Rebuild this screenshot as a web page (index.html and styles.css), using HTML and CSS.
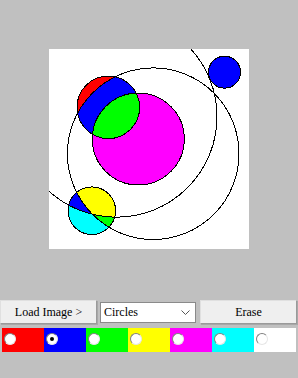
FILE: index.html
```html
<!DOCTYPE html>
<html>
<head>
<meta charset="utf-8">
<link rel="stylesheet" href="styles.css">
</head>
<body>
<div class="stage">
  <svg class="canvas" width="200" height="200" viewBox="0 0 200 200" shape-rendering="crispEdges">
    <defs>
      <clipPath id="inC2"><circle cx="67.4" cy="67.6" r="100.6"/></clipPath>
      <clipPath id="tl"><circle cx="59.3" cy="58.3" r="31.3"/></clipPath>
      <clipPath id="bl"><circle cx="42.8" cy="161.7" r="23.8"/></clipPath>
    </defs>
    <rect width="200" height="200" fill="#fff"/>
    <!-- magenta -->
    <circle cx="89.3" cy="90" r="46" fill="#ff00ff"/>
    <!-- top-left circle: red outside c1, blue inside c1, green inside magenta -->
    <circle cx="59.3" cy="58.3" r="31.3" fill="#ff0000"/>
    <g clip-path="url(#tl)">
      <circle cx="104.2" cy="104.7" r="85.8" fill="#0000ff"/>
      <circle cx="89.3" cy="90" r="46" fill="#00ff00"/>
    </g>
    <!-- bottom-left circle: four regions -->
    <circle cx="42.8" cy="161.7" r="23.8" fill="#00ffff"/>
    <g clip-path="url(#bl)">
      <circle cx="104.2" cy="104.7" r="85.8" fill="#00ff00"/>
      <circle cx="67.4" cy="67.6" r="100.6" fill="#0000ff"/>
      <g clip-path="url(#inC2)">
        <circle cx="104.2" cy="104.7" r="85.8" fill="#ffff00"/>
      </g>
    </g>
    <!-- small blue -->
    <circle cx="175.5" cy="23.2" r="16" fill="#0000ff"/>
    <!-- outlines -->
    <g fill="none" stroke="#000">
      <circle cx="89.3" cy="90" r="46"/>
      <circle cx="59.3" cy="58.3" r="31.3"/>
      <circle cx="42.8" cy="161.7" r="23.8"/>
      <circle cx="175.5" cy="23.2" r="16"/>
      <circle cx="104.2" cy="104.7" r="85.8"/>
      <circle cx="67.4" cy="67.6" r="100.6"/>
    </g>
  </svg>
</div>
<div class="toolbar">
  <button class="btn btn-load">Load Image &gt;</button>
  <div class="select">
    <span class="select-text">Circles</span>
    <svg class="chev" width="9" height="5" viewBox="0 0 9 5"><path d="M0.5 0.5 L4.5 4.5 L8.5 0.5" fill="none" stroke="#555" stroke-width="1"/></svg>
  </div>
  <button class="btn btn-erase">Erase</button>
</div>
<div class="palette">
  <div class="cell red"><span class="radio"></span></div>
  <div class="cell blue"><span class="radio checked"></span></div>
  <div class="cell green"><span class="radio"></span></div>
  <div class="cell yellow"><span class="radio"></span></div>
  <div class="cell magenta"><span class="radio"></span></div>
  <div class="cell cyan"><span class="radio"></span></div>
  <div class="cell white"><span class="radio"></span></div>
</div>
</body>
</html>
```

FILE: styles.css
```css
html, body {
  margin: 0;
  padding: 0;
  background: #c0c0c0;
  width: 298px;
  height: 378px;
  overflow: hidden;
  font-family: "Liberation Serif", "Times New Roman", serif;
  font-size: 12px;
}
.stage {
  display: flex;
  justify-content: center;
  padding-top: 49px;
  padding-right: 1px;
}
.canvas {
  display: block;
  width: 200px;
  height: 200px;
}
.toolbar {
  display: flex;
  align-items: center;
  margin-top: 51px;
  height: 24px;
}
.btn {
  box-sizing: border-box;
  height: 24px;
  width: 97px;
  margin: 0;
  padding: 0;
  background: #efefef;
  border: 1px solid #e0e0e0;
  border-right-color: #9a9a9a;
  border-bottom-color: #9a9a9a;
  box-shadow: 1px 1px 0 #a8a8a8;
  font-family: "Liberation Serif", "Times New Roman", serif;
  font-size: 12px;
  color: #000;
  text-align: center;
  line-height: 20px;
}
.select {
  box-sizing: border-box;
  width: 96px;
  height: 21px;
  margin-left: 3px;
  margin-right: 4px;
  background: #fff;
  border: 1px solid #8a8a8a;
  display: flex;
  align-items: center;
  justify-content: space-between;
  padding: 0 5px 0 3px;
}
.select-text {
  color: #000;
  line-height: 19px;
}
.chev {
  display: block;
}
.palette {
  display: flex;
  margin: 4px 0 0 2px;
}
.cell {
  width: 42px;
  height: 24px;
  display: flex;
  align-items: flex-start;
}
.red { background: #ff0000; }
.blue { background: #0000ff; }
.green { background: #00ff00; }
.yellow { background: #ffff00; }
.magenta { background: #ff00ff; }
.cyan { background: #00ffff; }
.white { background: #ffffff; }
.radio {
  box-sizing: border-box;
  width: 12px;
  height: 12px;
  margin: 5px 0 0 2px;
  border-radius: 50%;
  background: #fff;
  border: 1px solid;
  border-color: #808080 #e6e6e6 #e6e6e6 #808080;
  display: flex;
  align-items: center;
  justify-content: center;
}
.radio.checked::after {
  content: "";
  width: 4px;
  height: 4px;
  border-radius: 50%;
  background: #000;
}
```
